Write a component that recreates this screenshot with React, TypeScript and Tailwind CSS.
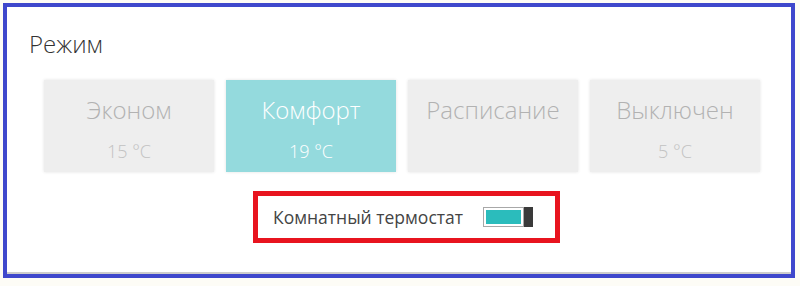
const modes = [
  { name: 'Эконом', temp: '15 °C' },
  { name: 'Комфорт', temp: '19 °C', active: true },
  { name: 'Расписание', temp: '' },
  { name: 'Выключен', temp: '5 °C' },
]

export default function App() {
  return (
    <div className="w-[800px] h-[286px] bg-[#fdfcf6] pt-[3px] pl-[3px] font-['Open_Sans','Noto_Sans',sans-serif]">
      <div className="w-[792px] h-[275px] border-4 border-[#3f48cc] bg-white flex flex-col">
        <div className="flex-1 border-b-2 border-[#cdcdcd] flex flex-col">
          <h1 className="pl-[22px] pt-[21px] text-[24px] leading-[32px] font-light text-[#333]">
            Режим
          </h1>

          <div className="flex gap-3 pl-[37px] mt-[20px]">
            {modes.map((m) => (
              <ModeCard key={m.name} {...m} />
            ))}
          </div>

          <div className="pl-[246px] mt-[19px]">
            <div className="w-[307px] h-[52px] border-[5px] border-[#e8141f] flex items-center pl-[15px]">
              <span className="text-[17.5px] text-[#444]">Комнатный термостат</span>
              <Toggle />
            </div>
          </div>
        </div>
      </div>
    </div>
  )
}

function ModeCard({
  name,
  temp,
  active,
}: {
  name: string
  temp: string
  active?: boolean
}) {
  return (
    <div
      className={`w-[170px] h-[92px] flex flex-col items-center pt-[14px] shadow-[0_0_3px_rgba(0,0,0,0.12)] ${
        active ? 'bg-[#94dadd] text-white' : 'bg-[#eeeeee] text-[#b2b2b2]'
      }`}
    >
      <span className="text-[24px] leading-[32px] font-light">{name}</span>
      <span
        className={`text-[18px] leading-[24px] font-light mt-[13px] ${
          active ? 'text-white' : 'text-[#c2c2c2]'
        }`}
      >
        {temp}
      </span>
    </div>
  )
}

function Toggle() {
  return (
    <div className="ml-[20px] flex items-stretch h-[20px]">
      <div className="w-[41px] border border-[#a8a8a8] p-[2px] bg-white">
        <div className="w-full h-full bg-[#2bbcbc]" />
      </div>
      <div className="w-[9px] bg-[#3a3a3a]" />
    </div>
  )
}
